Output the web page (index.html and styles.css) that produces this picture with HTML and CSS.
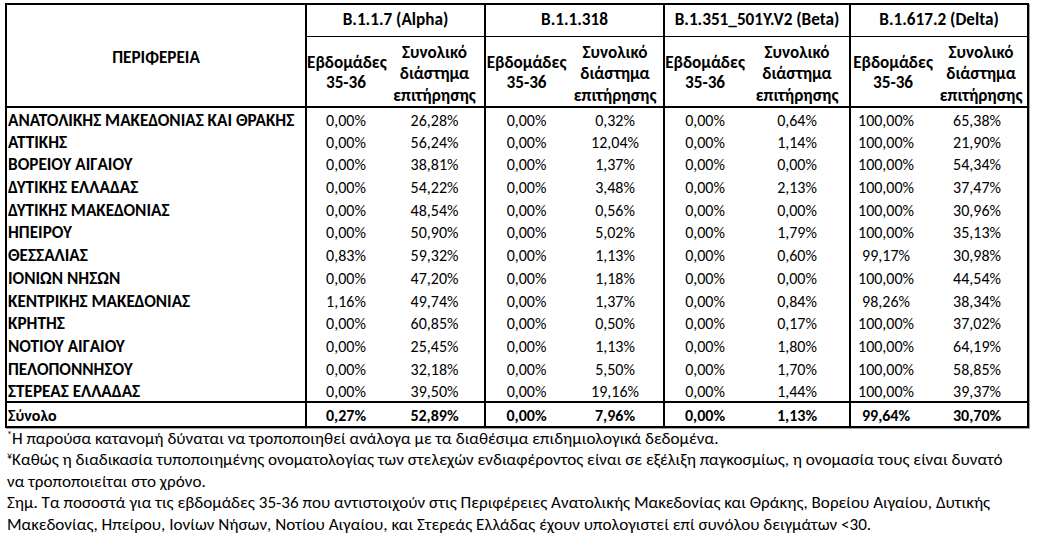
FILE: index.html
```html
<!DOCTYPE html>
<html lang="el">
<head>
<meta charset="utf-8">
<title>Κατανομή στελεχών ανά Περιφέρεια</title>
<link rel="stylesheet" href="styles.css">
</head>
<body>
<div class="page">
<table class="variants">
  <colgroup>
    <col class="c-region">
    <col class="c-a1"><col class="c-a2">
    <col class="c-b1"><col class="c-b2">
    <col class="c-c1"><col class="c-c2">
    <col class="c-d1"><col class="c-d2">
  </colgroup>
  <thead>
    <tr class="h-row1">
      <th rowspan="2" class="h-region">ΠΕΡΙΦΕΡΕΙΑ</th>
      <th colspan="2" class="h-group">B.1.1.7 (Alpha)</th>
      <th colspan="2" class="h-group">B.1.1.318</th>
      <th colspan="2" class="h-group">B.1.351_501Y.V2 (Beta)</th>
      <th colspan="2" class="h-group">B.1.617.2 (Delta)</th>
    </tr>
    <tr class="h-row2">
      <th class="h-weeks g-start">Εβδομάδες<br>35-36</th><th class="h-total">Συνολικό<br>διάστημα<br>επιτήρησης</th>
      <th class="h-weeks g-start">Εβδομάδες<br>35-36</th><th class="h-total">Συνολικό<br>διάστημα<br>επιτήρησης</th>
      <th class="h-weeks g-start">Εβδομάδες<br>35-36</th><th class="h-total">Συνολικό<br>διάστημα<br>επιτήρησης</th>
      <th class="h-weeks g-start">Εβδομάδες<br>35-36</th><th class="h-total">Συνολικό<br>διάστημα<br>επιτήρησης</th>
    </tr>
  </thead>
  <tbody>
    <tr><th>ΑΝΑΤΟΛΙΚΗΣ ΜΑΚΕΔΟΝΙΑΣ ΚΑΙ ΘΡΑΚΗΣ</th><td class="g-start">0,00%</td><td>26,28%</td><td class="g-start">0,00%</td><td>0,32%</td><td class="g-start">0,00%</td><td>0,64%</td><td class="g-start">100,00%</td><td>65,38%</td></tr>
    <tr><th>ΑΤΤΙΚΗΣ</th><td class="g-start">0,00%</td><td>56,24%</td><td class="g-start">0,00%</td><td>12,04%</td><td class="g-start">0,00%</td><td>1,14%</td><td class="g-start">100,00%</td><td>21,90%</td></tr>
    <tr><th>ΒΟΡΕΙΟΥ ΑΙΓΑΙΟΥ</th><td class="g-start">0,00%</td><td>38,81%</td><td class="g-start">0,00%</td><td>1,37%</td><td class="g-start">0,00%</td><td>0,00%</td><td class="g-start">100,00%</td><td>54,34%</td></tr>
    <tr><th>ΔΥΤΙΚΗΣ ΕΛΛΑΔΑΣ</th><td class="g-start">0,00%</td><td>54,22%</td><td class="g-start">0,00%</td><td>3,48%</td><td class="g-start">0,00%</td><td>2,13%</td><td class="g-start">100,00%</td><td>37,47%</td></tr>
    <tr><th>ΔΥΤΙΚΗΣ ΜΑΚΕΔΟΝΙΑΣ</th><td class="g-start">0,00%</td><td>48,54%</td><td class="g-start">0,00%</td><td>0,56%</td><td class="g-start">0,00%</td><td>0,00%</td><td class="g-start">100,00%</td><td>30,96%</td></tr>
    <tr><th>ΗΠΕΙΡΟΥ</th><td class="g-start">0,00%</td><td>50,90%</td><td class="g-start">0,00%</td><td>5,02%</td><td class="g-start">0,00%</td><td>1,79%</td><td class="g-start">100,00%</td><td>35,13%</td></tr>
    <tr><th>ΘΕΣΣΑΛΙΑΣ</th><td class="g-start">0,83%</td><td>59,32%</td><td class="g-start">0,00%</td><td>1,13%</td><td class="g-start">0,00%</td><td>0,60%</td><td class="g-start">99,17%</td><td>30,98%</td></tr>
    <tr><th>ΙΟΝΙΩΝ ΝΗΣΩΝ</th><td class="g-start">0,00%</td><td>47,20%</td><td class="g-start">0,00%</td><td>1,18%</td><td class="g-start">0,00%</td><td>0,00%</td><td class="g-start">100,00%</td><td>44,54%</td></tr>
    <tr><th>ΚΕΝΤΡΙΚΗΣ ΜΑΚΕΔΟΝΙΑΣ</th><td class="g-start">1,16%</td><td>49,74%</td><td class="g-start">0,00%</td><td>1,37%</td><td class="g-start">0,00%</td><td>0,84%</td><td class="g-start">98,26%</td><td>38,34%</td></tr>
    <tr><th>ΚΡΗΤΗΣ</th><td class="g-start">0,00%</td><td>60,85%</td><td class="g-start">0,00%</td><td>0,50%</td><td class="g-start">0,00%</td><td>0,17%</td><td class="g-start">100,00%</td><td>37,02%</td></tr>
    <tr><th>ΝΟΤΙΟΥ ΑΙΓΑΙΟΥ</th><td class="g-start">0,00%</td><td>25,45%</td><td class="g-start">0,00%</td><td>1,13%</td><td class="g-start">0,00%</td><td>1,80%</td><td class="g-start">100,00%</td><td>64,19%</td></tr>
    <tr><th>ΠΕΛΟΠΟΝΝΗΣΟΥ</th><td class="g-start">0,00%</td><td>32,18%</td><td class="g-start">0,00%</td><td>5,50%</td><td class="g-start">0,00%</td><td>1,70%</td><td class="g-start">100,00%</td><td>58,85%</td></tr>
    <tr><th>ΣΤΕΡΕΑΣ ΕΛΛΑΔΑΣ</th><td class="g-start">0,00%</td><td>39,50%</td><td class="g-start">0,00%</td><td>19,16%</td><td class="g-start">0,00%</td><td>1,44%</td><td class="g-start">100,00%</td><td>39,37%</td></tr>
  </tbody>
  <tfoot>
    <tr class="sum"><th>Σύνολο</th><td class="g-start">0,27%</td><td>52,89%</td><td class="g-start">0,00%</td><td>7,96%</td><td class="g-start">0,00%</td><td>1,13%</td><td class="g-start">99,64%</td><td>30,70%</td></tr>
  </tfoot>
</table>
<div class="notes">
  <p><sup class="mark">*</sup>Η παρούσα κατανομή δύναται να τροποποιηθεί ανάλογα με τα διαθέσιμα επιδημιολογικά δεδομένα.</p>
  <p><sup class="mark">¥</sup>Καθώς η διαδικασία τυποποιημένης ονοματολογίας των στελεχών ενδιαφέροντος είναι σε εξέλιξη παγκοσμίως, η ονομασία τους είναι δυνατό<br>να τροποποιείται στο χρόνο.</p>
  <p>Σημ. Τα ποσοστά για τις εβδομάδες 35-36 που αντιστοιχούν στις Περιφέρειες Ανατολικής Μακεδονίας και Θράκης, Βορείου Αιγαίου, Δυτικής<br>Μακεδονίας, Ηπείρου, Ιονίων Νήσων, Νοτίου Αιγαίου, και Στερεάς Ελλάδας έχουν υπολογιστεί επί συνόλου δειγμάτων &lt;30.</p>
</div>
</div>
</body>
</html>
```

FILE: styles.css
```css
html, body {
  margin: 0;
  padding: 0;
  background: #fff;
}

body {
  font-family: Carlito, Calibri, "Liberation Sans", "Noto Sans", sans-serif;
  color: #000;
  font-size: 17.2px;
}

.page {
  padding: 3px 0 0 5px;
}

.variants {
  border-collapse: collapse;
  table-layout: fixed;
  width: 1024px;
  border: 2px solid #000;
  box-shadow: 1px 1px 0 #a0a0a0;
}

.c-region { width: 300px; }
.c-a1 { width: 79px; }
.c-a2 { width: 100px; }
.c-b1 { width: 82px; }
.c-b2 { width: 97px; }
.c-c1 { width: 81px; }
.c-c2 { width: 105px; }
.c-d1 { width: 85px; }
.c-d2 { width: 93px; }

.variants th,
.variants td {
  padding: 0;
  font-weight: normal;
  text-align: center;
  white-space: nowrap;
  line-height: 16px;
  vertical-align: top;
}

.variants th { font-weight: bold; }

/* header */
.h-row1 { height: 32px; }
.h-row1 th { padding-top: 7px; }
.h-row2 { height: 71px; }

.h-region {
  border-right: 2px solid #000;
  border-bottom: 2px solid #000;
}

.variants .h-region { padding-top: 45px; }

.h-group {
  border-left: 2px solid #000;
  border-bottom: 1px solid #000;
}

.h-row2 th { border-bottom: 2px solid #000; }

.variants .h-weeks {
  line-height: 20px;
  padding-top: 16px;
}

.variants .h-total {
  line-height: 21.5px;
  vertical-align: bottom;
}

.g-start { border-left: 2px solid #000; }

/* body */
tbody tr { height: 22.7px; }

.variants tbody td,
.variants tbody th,
.variants tfoot td,
.variants tfoot th {
  padding-top: 5px;
}

.variants tbody td,
.variants tfoot td {
  font-size: 16px;
}

.variants tbody th,
.variants tfoot th {
  text-align: left;
  padding-left: 1px;
  border-right: 2px solid #000;
}

.variants tfoot th {
  font-size: 16px;
}

/* Delta columns sit slightly left of their cell centres */
.variants tbody td:nth-child(8),
.variants tfoot td:nth-child(8) {
  padding-right: 14px;
}

.variants tbody td:nth-child(9),
.variants tfoot td:nth-child(9) {
  padding-right: 8px;
}

.sum { height: 25px; }

.variants .sum th,
.variants .sum td {
  border-top: 2px solid #000;
  font-weight: bold;
}

/* footnotes */
.notes {
  padding: 0 0 0 2px;
  font-size: 17.1px;
  line-height: 21.5px;
}

.notes p { margin: 0; }

.mark {
  font-size: 10px;
  vertical-align: 6px;
  line-height: 0;
}
```
